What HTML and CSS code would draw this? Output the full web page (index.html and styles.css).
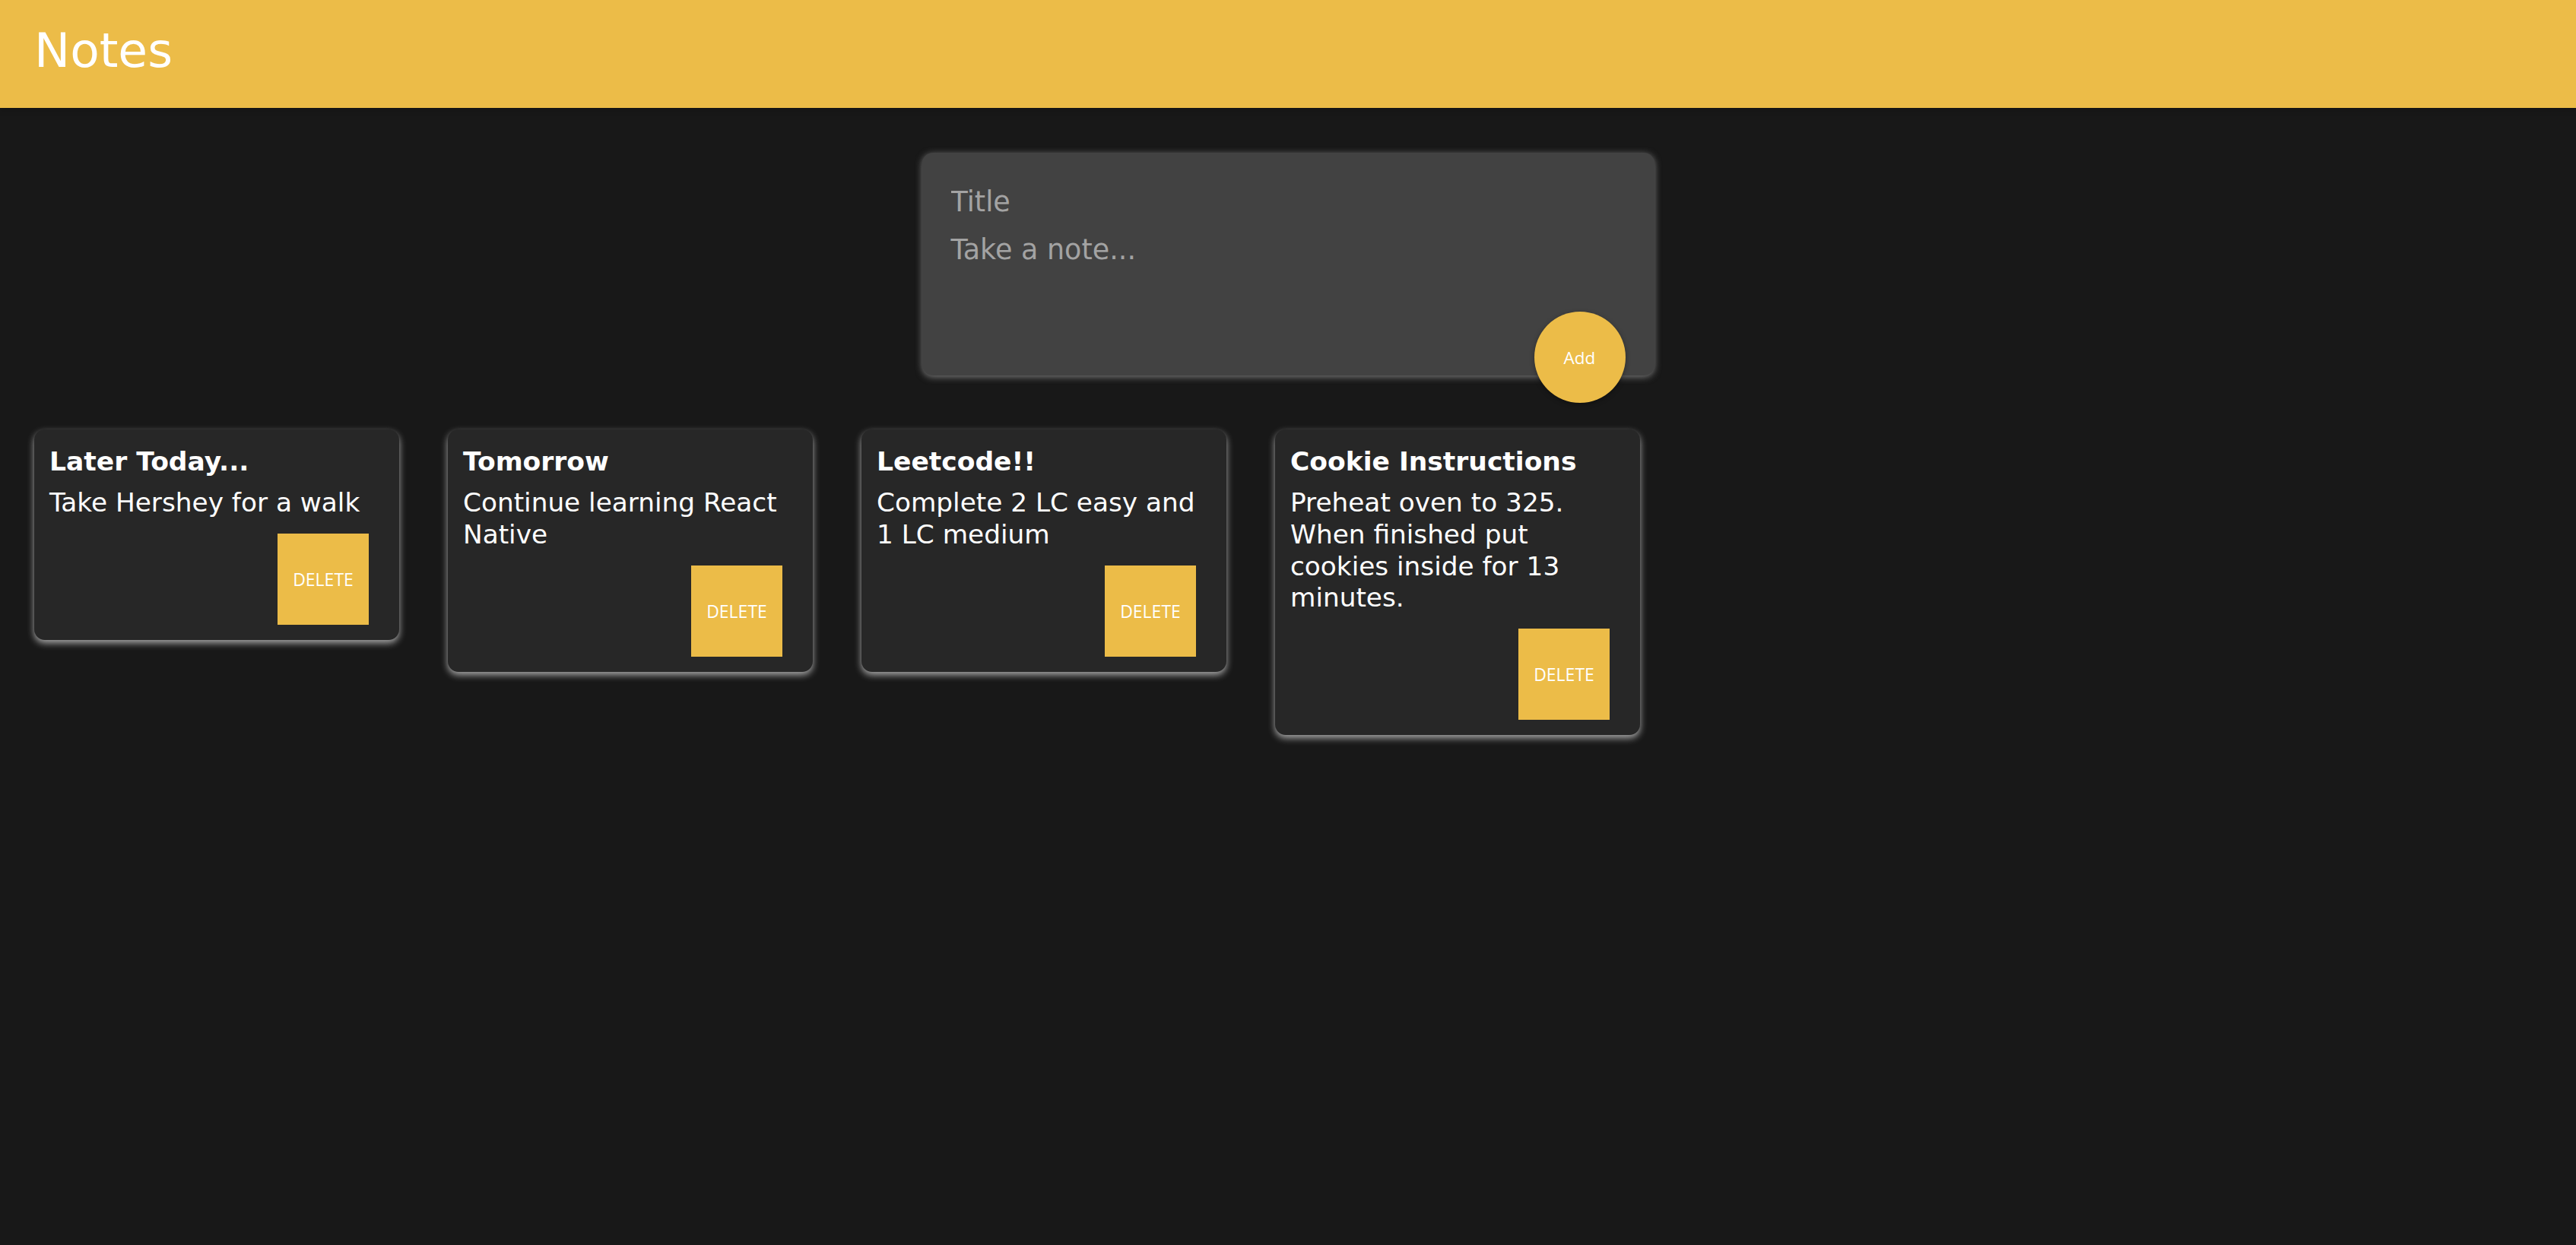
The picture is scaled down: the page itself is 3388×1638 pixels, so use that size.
FILE: index.html
```html
<!DOCTYPE html>
<html lang="en">
<head>
<meta charset="utf-8">
<title>Keeper</title>
<link rel="stylesheet" href="styles.css">
</head>
<body>
<header class="app-header">
  <h1 class="app-title">Notes</h1>
</header>
<main>
  <form class="create-note">
    <input class="note-input" name="title" placeholder="Title">
    <textarea class="note-textarea" name="content" placeholder="Take a note..." rows="3"></textarea>
    <button class="add-btn" type="button">Add</button>
  </form>
  <section class="notes">
    <article class="note">
      <h2 class="note-title">Later Today...</h2>
      <p class="note-body">Take Hershey for a walk</p>
      <div class="note-actions"><button class="delete-btn" type="button">DELETE</button></div>
    </article>
    <article class="note">
      <h2 class="note-title">Tomorrow</h2>
      <p class="note-body">Continue learning React Native</p>
      <div class="note-actions"><button class="delete-btn" type="button">DELETE</button></div>
    </article>
    <article class="note">
      <h2 class="note-title">Leetcode!!</h2>
      <p class="note-body">Complete 2 LC easy and 1 LC medium</p>
      <div class="note-actions"><button class="delete-btn" type="button">DELETE</button></div>
    </article>
    <article class="note">
      <h2 class="note-title">Cookie Instructions</h2>
      <p class="note-body">Preheat oven to 325. When finished put cookies inside for 13 minutes.</p>
      <div class="note-actions"><button class="delete-btn" type="button">DELETE</button></div>
    </article>
  </section>
</main>
</body>
</html>
```
FILE: styles.css
```css
* {
  box-sizing: border-box;
}

html, body {
  margin: 0;
  padding: 0;
}

body {
  background: #181818;
  font-family: "DejaVu Sans", "Liberation Sans", sans-serif;
  color: #ffffff;
  min-height: 100vh;
}

.app-header {
  height: 142px;
  background: #ecbc48;
  padding: 35px 0 0 45px;
  box-shadow: 0 0 10px rgba(0, 0, 0, 0.3);
}

.app-title {
  margin: 0;
  font-family: "DejaVu Sans", sans-serif;
  font-weight: normal;
  font-size: 63px;
  line-height: 63px;
  color: #ffffff;
}

.create-note {
  position: relative;
  width: 963px;
  height: 293px;
  margin: 59px auto 71px auto;
  padding: 36px 34px 30px 34px;
  background: #424242;
  border-radius: 14px;
  box-shadow: 0 2px 10px rgb(120, 120, 120);
}

.note-input,
.note-textarea {
  display: block;
  width: 100%;
  border: none;
  outline: none;
  background: transparent;
  color: #ffffff;
  font-family: "DejaVu Sans", sans-serif;
  font-size: 36.5px;
  resize: none;
}

.note-input {
  height: 56px;
  padding: 0 4px;
}

.note-textarea {
  height: 171px;
  padding: 14px 4px 0 4px;
  line-height: 44px;
  overflow: hidden;
}

.note-input::placeholder,
.note-textarea::placeholder {
  color: #a3a3a3;
  opacity: 1;
}

.add-btn {
  position: absolute;
  right: 38px;
  bottom: -36px;
  width: 120px;
  height: 120px;
  border: none;
  border-radius: 50%;
  background: #ecbc48;
  color: #ffffff;
  font-family: "Open Sans", "DejaVu Sans", sans-serif;
  font-size: 22.5px;
  box-shadow: 0 2px 6px rgba(0, 0, 0, 0.35);
  padding: 0;
}

.notes {
  display: flex;
  align-items: flex-start;
  gap: 64px;
  padding-left: 45px;
}

.note {
  width: 480px;
  flex: none;
  padding: 22px 20px 20px 20px;
  background: #272727;
  border-radius: 14px;
  box-shadow: 0 4px 10px #a8a8a8;
}

.note-title {
  margin: 0 0 12.4px 0;
  font-size: 34.5px;
  line-height: 41.7px;
  font-weight: bold;
}

.note-body {
  margin: 0 0 19px 0;
  font-size: 34.3px;
  line-height: 41.7px;
  white-space: pre-wrap;
  word-wrap: break-word;
}

.note-actions {
  display: flex;
  justify-content: flex-end;
}

.delete-btn {
  width: 120px;
  height: 120px;
  margin-right: 20px;
  border: none;
  padding: 0;
  background: #ecbc48;
  color: #ffffff;
  font-family: "Open Sans", "DejaVu Sans", sans-serif;
  font-size: 23px;
}
```
